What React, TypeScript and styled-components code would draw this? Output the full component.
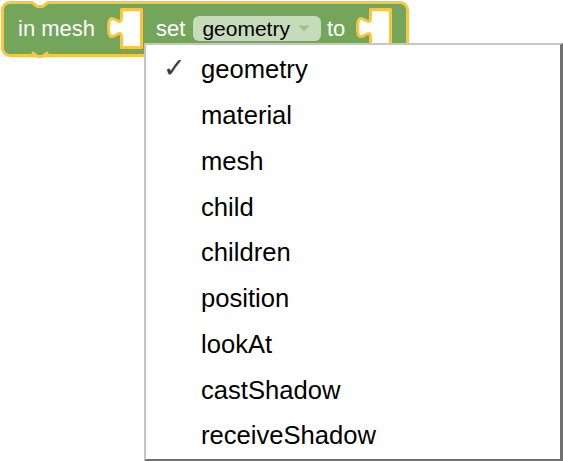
import React from "react";
import styled, { createGlobalStyle } from "styled-components";

const GlobalStyle = createGlobalStyle`
  html, body {
    margin: 0;
    padding: 0;
    background: #ffffff;
  }
  body {
    font-family: "Liberation Sans", Arial, sans-serif;
    overflow: hidden;
  }
`;

const Workspace = styled.div`
  position: relative;
  width: 563px;
  height: 461px;
  overflow: hidden;
`;

const Block = styled.div`
  position: relative;
  display: inline-flex;
  align-items: center;
  box-sizing: border-box;
  height: 56px;
  margin: 1px 0 0 1px;
  padding: 0 13px 1px 14px;
  background: #73a55b;
  border: 3px solid #fcc53e;
  border-radius: 9px;
`;

const Label = styled.span<{ $ml?: number }>`
  margin-left: ${(p) => p.$ml ?? 0}px;
  color: #ffffff;
  font-size: 22px;
  line-height: 1;
  white-space: nowrap;
`;

const Field = styled.div<{ $ml?: number }>`
  display: inline-flex;
  align-items: center;
  box-sizing: border-box;
  height: 25px;
  margin-left: ${(p) => p.$ml ?? 0}px;
  padding: 0 11px 0 9px;
  gap: 8px;
  border-radius: 6px;
  background: #c5dbb9;
  color: #000000;
  font-size: 21px;
  white-space: nowrap;
`;

const NotchTop = styled.svg`
  position: absolute;
  left: 24px;
  top: -4px;
  overflow: visible;
`;

const NotchBottom = styled.svg`
  position: absolute;
  left: 24px;
  bottom: -7px;
  overflow: visible;
`;

const SlotSvg = styled.svg<{ $ml?: number }>`
  display: block;
  flex: none;
  margin-left: ${(p) => p.$ml ?? 0}px;
`;

const Menu = styled.div`
  position: absolute;
  left: 144px;
  top: 43px;
  width: 419px;
  box-sizing: border-box;
  padding-top: 2px;
  background: #ffffff;
  border-left: 2px solid #c6c6c6;
  border-top: 2px solid #c6c6c6;
  border-right: 3px solid #6f6f6f;
  border-bottom: 3px solid #6f6f6f;
`;

const Item = styled.div`
  display: flex;
  align-items: center;
  height: 45.75px;
  padding-left: 17px;
  color: #000000;
  font-size: 25.6px;
  white-space: nowrap;
`;

const Check = styled.span`
  display: inline-block;
  width: 38px;
  color: #3a3a3a;
  font-family: "DejaVu Sans", sans-serif;
  font-size: 27px;
  line-height: 1;
  margin-top: -5px;
`;

const Slot = ({ ml }: { ml: number }) => (
  <SlotSvg $ml={ml} width="39" height="44" viewBox="0 0 39 44">
    <path
      d="M16.5,2.5 V10 c 0,14 -13,-11 -13,10.5 s 13,-3.5 13,10.5 V40.5 H36.5 V2.5 Z"
      fill="#ffffff"
      stroke="#fcc53e"
      strokeWidth="3"
      strokeLinejoin="round"
    />
  </SlotSvg>
);

const items = [
  "geometry",
  "material",
  "mesh",
  "child",
  "children",
  "position",
  "lookAt",
  "castShadow",
  "receiveShadow",
];

export default function App() {
  return (
    <Workspace>
      <GlobalStyle />
      <Block>
        <NotchTop width="24" height="10" viewBox="0 0 24 10">
          <path d="M4,0 H20 V2.5 L14.5,6.5 H9.5 L4,2.5 Z" fill="#ffffff" />
          <path
            d="M0,2.5 H4 L9.5,6.5 H14.5 L20,2.5 H24"
            fill="none"
            stroke="#fcc53e"
            strokeWidth="3"
          />
        </NotchTop>
        <NotchBottom width="24" height="10" viewBox="0 0 24 10">
          <path d="M4,0 H20 V1.5 L14.5,5.5 H9.5 L4,1.5 Z" fill="#73a55b" />
          <path
            d="M4,1.5 L9.5,5.5 H14.5 L20,1.5"
            fill="none"
            stroke="#fcc53e"
            strokeWidth="3"
            strokeLinejoin="round"
          />
        </NotchBottom>
        <Label>in mesh</Label>
        <Slot ml={10} />
        <Label $ml={12}>set</Label>
        <Field $ml={8}>
          geometry
          <svg width="12" height="7" viewBox="0 0 12 7">
            <path d="M0.5,0.5 H11.5 L6,6.5 Z" fill="#9dc48c" />
          </svg>
        </Field>
        <Label $ml={6}>to</Label>
        <Slot ml={9} />
      </Block>
      <Menu>
        {items.map((name, i) => (
          <Item key={name}>
            <Check>{i === 0 ? "✓" : ""}</Check>
            {name}
          </Item>
        ))}
      </Menu>
    </Workspace>
  );
}
